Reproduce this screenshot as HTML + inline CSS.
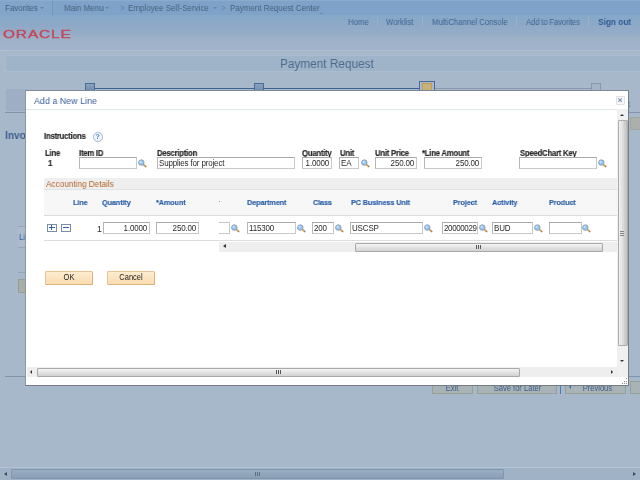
<!DOCTYPE html>
<html><head><meta charset="utf-8"><title>Payment Request</title>
<style>
*{box-sizing:border-box;margin:0;padding:0}
html,body{width:640px;height:480px;overflow:hidden}
body{position:relative;background:#a8b8cb;font-family:"Liberation Sans",Arial,sans-serif;font-size:9px;color:#4a6486}
.abs{position:absolute;white-space:nowrap;will-change:transform}
.sx{transform:scaleX(0.9);transform-origin:0 0}
.t{display:inline-block;transform:scaleX(0.9);transform-origin:0 50%}
.r .t{transform-origin:100% 50%}
.c .t{transform-origin:50% 50%}
#nav{left:0;top:0;width:640px;height:15px;background:#7fa3c8;border-top:1px solid #89abcd}
#fav{left:0;top:1px;width:53px;height:14px;background:#82a5c9;border-right:1px solid #7697bb}
#hdr{left:0;top:15px;width:640px;height:36px;background:linear-gradient(#86a8c9 0,#8fa9c7 33%,#96adc7 56%,#9ab0c5 58%,#9fb2c9 80%,#a3b4cd 100%)}
.nv{top:3.4px;font-size:8.89px;color:#47627f;line-height:10px}
.lk{top:17px;font-size:8.61px;color:#3f6492;line-height:10px}
.sep{top:17px;width:1px;height:9px;background:#9bb0c9}
#ttl{left:5px;top:55px;width:635px;height:17px;background:#9fb4c8;border:1px solid #aabdce;border-right:0}
#ttlt{left:280px;top:57px;font-size:13.11px;line-height:14px;color:#4c6a8f}
#modal{left:25px;top:90px;width:604px;height:296px;background:#fff;border:1px solid #777c84;border-top-color:#7d8895;border-left-color:#8d959e}
.lbl{font-size:8.56px;letter-spacing:-0.23px;font-weight:bold;color:#2b2b2b;-webkit-text-stroke:0.2px #2b2b2b;line-height:10px}
.hd{font-size:8.11px;letter-spacing:-0.13px;font-weight:bold;color:#2a5ea6;-webkit-text-stroke:0.15px #2a5ea6;line-height:10px}
.inp{height:12px;border:1px solid #c8c8c8;border-top-color:#a9a9a9;border-left-color:#b6b6b6;background:#fff;font-size:8.89px;letter-spacing:-0.17px;line-height:11.5px;color:#2a2a2a;padding:0 0 0 0.8px;overflow:hidden}
.r{text-align:right;padding:0 1.5px 0 0}
.btn{height:13.5px;border:1px solid #ddb17c;border-top-color:#e6c394;border-left-color:#e6c394;border-radius:1.5px;background:linear-gradient(#fdecd0,#fadcb0);font-size:8.33px;line-height:11px;color:#222;text-align:center}
.bb{top:381px;height:13px;background:#a9b2b4;border:1px solid #989e98;font-size:8.44px;line-height:12px;color:#41608d;text-align:center;overflow:hidden}
.sq{border:1px solid #4a6a98;background:linear-gradient(#8ba1bd,#6c89af)}
svg{position:absolute;overflow:visible}
</style></head><body>
<svg width="0" height="0" style="left:0;top:0"><defs>
<symbol id="lk" viewBox="0 0 9 9"><line x1="5.5" y1="5.7" x2="7.7" y2="7.5" stroke="#e39a35" stroke-width="1.7" stroke-linecap="round"/><circle cx="7.6" cy="7.4" r="0.6" fill="#5b86c8"/><circle cx="3.3" cy="3.6" r="2.75" fill="#93c6f5" stroke="#8393a8" stroke-width="0.8"/><circle cx="2.7" cy="2.9" r="1.1" fill="#c9e4fb"/></symbol>
</defs></svg>
<div class="abs" id="nav"></div>
<div class="abs" id="fav"></div>
<div class="abs" id="hdr"></div>

<div class="abs nv sx" style="left:5px">Favorites</div>
<div class="abs nv sx" style="left:63.5px">Main Menu</div>
<div class="abs nv sx" style="left:120px;color:#6482a8">&gt;</div>
<div class="abs nv sx" style="left:127.5px">Employee Self-Service</div>
<div class="abs nv sx" style="left:221px;color:#6482a8">&gt;</div>
<div class="abs" style="left:320px;top:13px;width:3px;height:1px;background:#6a8bb2"></div>
<div class="abs nv sx" style="left:230px">Payment Request Center</div>
<div class="abs" style="left:40px;top:7px;width:0;height:0;border-left:2.3px solid transparent;border-right:2.3px solid transparent;border-top:2.8px solid #5f84b2"></div>
<div class="abs" style="left:105px;top:7px;width:0;height:0;border-left:2.3px solid transparent;border-right:2.3px solid transparent;border-top:2.8px solid #5f84b2"></div>
<div class="abs" style="left:213px;top:7px;width:0;height:0;border-left:2.3px solid transparent;border-right:2.3px solid transparent;border-top:2.8px solid #5f84b2"></div>
<div class="abs lk sx" style="left:347.5px;">Home</div>
<div class="abs lk sx" style="left:386px;">Worklist</div>
<div class="abs lk sx" style="left:431.5px;">MultiChannel Console</div>
<div class="abs lk sx" style="left:525.5px;letter-spacing:-0.17px">Add to Favorites</div>
<div class="abs lk sx" style="left:597.5px;font-weight:bold;font-size:9.22px;color:#2f5a95">Sign out</div>
<div class="abs sep" style="left:377px"></div>
<div class="abs sep" style="left:422px"></div>
<div class="abs sep" style="left:516px"></div>
<div class="abs sep" style="left:588px"></div>
<div class="abs" style="left:2.5px;top:27.8px;font-size:11px;line-height:13px;letter-spacing:0.7px;color:#c4485f;font-weight:normal;-webkit-text-stroke:0.4px #c4485f;transform:scaleX(1.39);transform-origin:0 0">ORACLE</div>
<div class="abs" style="left:0;top:50px;width:640px;height:1px;background:#afc0d3"></div>
<div class="abs" style="left:70px;top:30px;width:1px;height:1px;background:#c4687c"></div>
<div class="abs" id="ttl"></div><div class="abs sx" id="ttlt">Payment Request</div>
<div class="abs" style="left:95px;top:88px;width:325px;height:1px;background:#3f618f"></div>
<div class="abs" style="left:435px;top:88px;width:156px;height:1px;background:#8797ad"></div>
<div class="abs sq" style="left:85px;top:83px;width:10px;height:10px"></div>
<div class="abs sq" style="left:254px;top:83px;width:10px;height:10px"></div>
<div class="abs sq" style="left:419px;top:81px;width:16px;height:12px;background:#a9b8cc;border-color:#4a6a98"></div>
<div class="abs" style="left:422px;top:83px;width:10px;height:10px;background:#c6b07c;border:1px solid #c59a4a"></div>
<div class="abs sq" style="left:591px;top:83px;width:10px;height:10px;background:#a3b4c9;border-color:#8797ad"></div>
<div class="abs" style="left:5.5px;top:88.5px;width:22px;height:22px;background:#9eafc5"></div>
<div class="abs" style="left:5px;top:112px;width:635px;height:1px;background:#8294ab"></div>
<div class="abs sx" style="left:5px;top:129.3px;font-size:11.33px;font-weight:bold;line-height:13px;color:#3f5f92">Invoice</div>
<div class="abs" style="left:17.5px;top:226px;width:10px;height:22px;background:#adbbcc;border-top:1px solid #95a6bb;border-bottom:1px solid #95a6bb"></div>
<div class="abs sx" style="left:18.5px;top:232px;font-size:8.89px;line-height:10px;color:#2f62b0">Lin</div>
<div class="abs" style="left:17.5px;top:272px;width:10px;height:1px;background:#95a6bb"></div>
<div class="abs" style="left:17.5px;top:278.5px;width:10px;height:13.5px;background:#a9aea8;border:1px solid #989c96"></div>
<div class="abs" style="left:5px;top:376px;width:635px;height:1px;background:#8294ab"></div>
<div class="abs sx" style="left:622px;top:99px;font-size:8.89px;line-height:10px;color:#4a78b8">nk</div>
<div class="abs" style="left:630px;top:117px;width:12px;height:13px;background:#abb0ac;border:1px solid #a0a59f"></div>
<div class="abs bb c" style="left:432px;width:41px"><span class="t">Exit</span></div>
<div class="abs bb c" style="left:477px;width:80px"><span class="t">Save for Later</span></div>
<div class="abs bb c" style="left:565px;width:61px;padding-left:3px"><span class="t">Previous</span></div>
<div class="abs bb c" style="left:630px;width:12px"><span class="t"></span></div>
<div class="abs" style="left:560px;top:385px;width:1px;height:9px;background:#4a78b8"></div>
<div class="abs" style="left:568.5px;top:384.5px;width:0;height:0;border-top:2.2px solid transparent;border-bottom:2.2px solid transparent;border-right:2.8px solid #3565b5"></div>
<div class="abs" style="left:0;top:467px;width:640px;height:13px;background:#a0b2c6;border-top:1px solid #b5c4d5"></div>
<div class="abs" style="left:11px;top:469px;width:493px;height:10px;background:linear-gradient(#9aadc2,#8a9eb6);border:1px solid #8095ae;border-radius:1px"></div>
<div class="abs" style="left:4px;top:472px;width:0;height:0;border-top:2.5px solid transparent;border-bottom:2.5px solid transparent;border-right:3px solid #3f4a58"></div>
<div class="abs" style="left:633px;top:472px;width:0;height:0;border-top:2.5px solid transparent;border-bottom:2.5px solid transparent;border-left:3px solid #3f4a58"></div>
<div class="abs" style="left:255px;top:472px;width:5px;height:4px;background:repeating-linear-gradient(90deg,#5c6b7e 0 1px,transparent 1px 2px)"></div>
<div class="abs" id="modal"></div>
<div class="abs sx" style="left:33.5px;top:94.7px;font-size:9.94px;line-height:11px;color:#3b60a0">Add a New Line</div>
<div class="abs" style="left:26px;top:109px;width:591px;height:1px;background:#dde8e8"></div>
<div class="abs" style="left:616px;top:96px;width:9px;height:9px;border:1px solid #e2e2e2;border-radius:1px;background:#f7f7f7"></div>
<svg style="left:618.3px;top:98.4px" width="4.2" height="4.2" viewBox="0 0 4 4"><path d="M0.3 0.3L3.7 3.7M3.7 0.3L0.3 3.7" stroke="#7892b6" stroke-width="1"/></svg>
<div class="abs lbl sx" style="left:44px;top:131.2px">Instructions</div>
<div class="abs" style="left:92.5px;top:132px;width:9.5px;height:9.5px;border-radius:50%;border:1px solid #9fb6d4;background:#eef4fb;font-size:7px;font-weight:bold;line-height:7.5px;text-align:center;color:#5d86bf">?</div>
<div class="abs lbl sx" style="left:44.5px;top:147.5px">Line</div>
<div class="abs lbl sx" style="left:48px;top:157.5px">1</div>
<div class="abs lbl sx" style="left:79px;top:147.5px">Item ID</div>
<div class="abs inp" style="left:79px;top:157px;width:58px"><span class="t"></span></div>
<svg style="left:137.5px;top:159px" width="9" height="9"><use href="#lk"/></svg>
<div class="abs lbl sx" style="left:157px;top:147.5px">Description</div>
<div class="abs inp" style="left:157px;top:157px;width:138px"><span class="t">Supplies for project</span></div>
<div class="abs lbl sx" style="left:302px;top:147.5px">Quantity</div>
<div class="abs inp r" style="left:302px;top:157px;width:30px"><span class="t">1.0000</span></div>
<div class="abs lbl sx" style="left:340px;top:147.5px">Unit</div>
<div class="abs inp" style="left:339px;top:157px;width:20px"><span class="t">EA</span></div>
<svg style="left:360.5px;top:159px" width="9" height="9"><use href="#lk"/></svg>
<div class="abs lbl sx" style="left:374.5px;top:147.5px">Unit Price</div>
<div class="abs inp r" style="left:374.5px;top:157px;width:42px"><span class="t">250.00</span></div>
<div class="abs lbl sx" style="left:422px;top:147.5px">*Line Amount</div>
<div class="abs inp r" style="left:424px;top:157px;width:58px"><span class="t">250.00</span></div>
<div class="abs lbl sx" style="left:520px;top:147.5px">SpeedChart Key</div>
<div class="abs inp" style="left:519px;top:157px;width:78px"><span class="t"></span></div>
<svg style="left:597.5px;top:159px" width="9" height="9"><use href="#lk"/></svg>
<div class="abs" style="left:44px;top:178px;width:573px;height:11px;background:#efefef"></div>
<div class="abs" style="left:44px;top:189px;width:573px;height:1px;background:#dfe3e3"></div>
<div class="abs" style="left:44px;top:190px;width:573px;height:25px;background:#f7f7f7"></div>
<div class="abs" style="left:44px;top:215px;width:573px;height:1px;background:#dcdcdc"></div>
<div class="abs" style="left:44px;top:240px;width:573px;height:1px;background:#dcdcdc"></div>
<div class="abs sx" style="left:45.5px;top:178.5px;font-size:9.11px;line-height:11px;color:#b0652c">Accounting Details</div>
<div class="abs hd sx" style="left:73px;top:197.5px">Line</div>
<div class="abs hd sx" style="left:102px;top:197.5px">Quantity</div>
<div class="abs hd sx" style="left:156px;top:197.5px">*Amount</div>
<div class="abs hd sx" style="left:247px;top:197.5px">Department</div>
<div class="abs hd sx" style="left:312.5px;top:197.5px">Class</div>
<div class="abs hd sx" style="left:350.5px;top:197.5px">PC Business Unit</div>
<div class="abs hd sx" style="left:453px;top:197.5px">Project</div>
<div class="abs hd sx" style="left:491.5px;top:197.5px">Activity</div>
<div class="abs hd sx" style="left:548.5px;top:197.5px">Product</div>
<div class="abs" style="left:219px;top:201px;width:1px;height:1px;background:#6aa0d8"></div>
<div class="abs" style="left:46.5px;top:223.5px;width:9.5px;height:8.3px;border:1px solid #7b8ea8;background:#fff"></div>
<div class="abs" style="left:48.5px;top:227.2px;width:5.5px;height:1.3px;background:#2b5fb0"></div>
<div class="abs" style="left:50.6px;top:225.2px;width:1.3px;height:5.3px;background:#2b5fb0"></div>
<div class="abs" style="left:60.5px;top:223.5px;width:9.5px;height:8.3px;border:1px solid #7b8ea8;background:#fff"></div>
<div class="abs" style="left:62.5px;top:227.2px;width:5.5px;height:1.3px;background:#2b5fb0"></div>
<div class="abs sx" style="left:96.5px;top:223.5px;font-size:8.89px;line-height:10px;color:#333">1</div>
<div class="abs inp r" style="left:102.5px;top:222px;width:47px"><span class="t">1.0000</span></div>
<div class="abs inp r" style="left:156px;top:222px;width:43px"><span class="t">250.00</span></div>
<div class="abs inp" style="left:219px;top:222px;width:11px;border-left:0;border-top-color:#c4c4c4"></div>
<svg style="left:231.2px;top:224px" width="9" height="9"><use href="#lk"/></svg>
<div class="abs inp" style="left:247px;top:222px;width:49px"><span class="t">115300</span></div>
<svg style="left:297px;top:224px" width="9" height="9"><use href="#lk"/></svg>
<div class="abs inp" style="left:312px;top:222px;width:21.5px"><span class="t">200</span></div>
<svg style="left:335px;top:224px" width="9" height="9"><use href="#lk"/></svg>
<div class="abs inp" style="left:350px;top:222px;width:72.5px"><span class="t">USCSP</span></div>
<svg style="left:423.5px;top:224px" width="9" height="9"><use href="#lk"/></svg>
<div class="abs inp" style="left:442px;top:222px;width:36px;letter-spacing:-0.42px"><span class="t">20000029</span></div>
<svg style="left:479px;top:224px" width="9" height="9"><use href="#lk"/></svg>
<div class="abs inp" style="left:491.5px;top:222px;width:41px"><span class="t">BUD</span></div>
<svg style="left:533.5px;top:224px" width="9" height="9"><use href="#lk"/></svg>
<div class="abs inp" style="left:548.5px;top:222px;width:33px"><span class="t"></span></div>
<svg style="left:582px;top:224px" width="9" height="9"><use href="#lk"/></svg>
<div class="abs" style="left:219px;top:242px;width:398px;height:10px;background:#eeeeee"></div>
<div class="abs" style="left:355px;top:242.5px;width:248px;height:9px;background:linear-gradient(#f4f4f4,#d2d2d2);border:1px solid #a9a9a9;border-radius:1px"></div>
<div class="abs" style="left:223px;top:244.3px;width:0;height:0;border-top:2.4px solid transparent;border-bottom:2.4px solid transparent;border-right:3px solid #333"></div>
<div class="abs" style="left:476px;top:245px;width:5px;height:3.5px;background:repeating-linear-gradient(90deg,#555 0 1px,transparent 1px 2px)"></div>
<div class="abs btn c" style="left:45px;top:270.5px;width:47.5px"><span class="t">OK</span></div>
<div class="abs btn c" style="left:107px;top:270.5px;width:47.5px"><span class="t">Cancel</span></div>
<div class="abs" style="left:617px;top:109px;width:11px;height:267.5px;background:#f0f0f0"></div>
<div class="abs" style="left:617.5px;top:120px;width:9.5px;height:226px;background:linear-gradient(90deg,#f0f0f0,#e2e2e2 40%,#bebebe);border:1px solid #adadad;border-radius:1px"></div>
<div class="abs" style="left:619.8px;top:113.7px;width:0;height:0;border-left:2.2px solid transparent;border-right:2.2px solid transparent;border-bottom:2.5px solid #333"></div>
<div class="abs" style="left:619.8px;top:359.5px;width:0;height:0;border-left:2.2px solid transparent;border-right:2.2px solid transparent;border-top:2.5px solid #333"></div>
<div class="abs" style="left:620px;top:230.5px;width:4px;height:5px;background:repeating-linear-gradient(0deg,#888 0 1px,transparent 1px 2px)"></div>
<div class="abs" style="left:27px;top:367px;width:590px;height:10px;background:#eeeeee"></div>
<div class="abs" style="left:37px;top:367.5px;width:483px;height:9px;background:linear-gradient(#f4f4f4,#d2d2d2);border:1px solid #a9a9a9;border-radius:1px"></div>
<div class="abs" style="left:30px;top:370px;width:0;height:0;border-top:2.2px solid transparent;border-bottom:2.2px solid transparent;border-right:2.8px solid #333"></div>
<div class="abs" style="left:610.5px;top:370px;width:0;height:0;border-top:2.2px solid transparent;border-bottom:2.2px solid transparent;border-left:2.8px solid #333"></div>
<div class="abs" style="left:276px;top:370px;width:5px;height:3.5px;background:repeating-linear-gradient(90deg,#555 0 1px,transparent 1px 2px)"></div>
<div class="abs" style="left:626px;top:383px;width:1px;height:1px;background:#8a8a8a"></div>
<div class="abs" style="left:624px;top:383px;width:1px;height:1px;background:#8a8a8a"></div>
<div class="abs" style="left:622px;top:383px;width:1px;height:1px;background:#8a8a8a"></div>
<div class="abs" style="left:626px;top:380.5px;width:1px;height:1px;background:#8a8a8a"></div>
<div class="abs" style="left:624px;top:380.5px;width:1px;height:1px;background:#8a8a8a"></div>
<div class="abs" style="left:626px;top:378px;width:1px;height:1px;background:#8a8a8a"></div>
</body></html>
